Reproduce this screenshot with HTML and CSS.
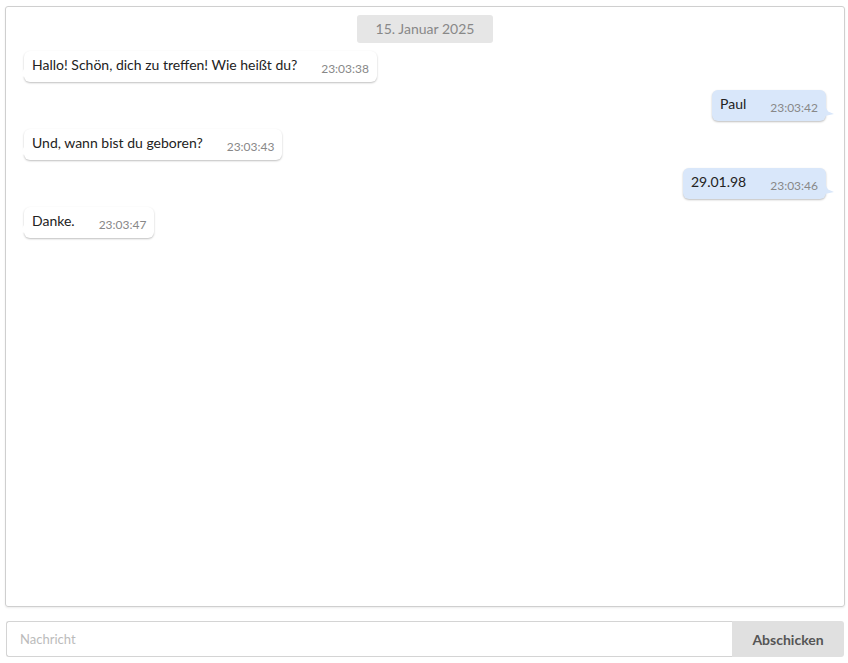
FILE: index.html
```html
<!DOCTYPE html>
<html lang="de">
<head>
<meta charset="utf-8">
<title>Chat</title>
<link rel="stylesheet" href="styles.css">
</head>
<body>
<div class="page">
  <div class="chat">
    <div class="date-row"><span class="date">15. Januar 2025</span></div>
    <div class="msg in"><span class="text">Hallo! Schön, dich zu treffen! Wie heißt du?</span><span class="time">23:03:38</span></div>
    <div class="msg out"><span class="text">Paul</span><span class="time">23:03:42</span></div>
    <div class="msg in"><span class="text">Und, wann bist du geboren?</span><span class="time">23:03:43</span></div>
    <div class="msg out"><span class="text">29.01.98</span><span class="time">23:03:46</span></div>
    <div class="msg in"><span class="text">Danke.</span><span class="time">23:03:47</span></div>
  </div>
  <form class="composer">
    <input class="input" type="text" placeholder="Nachricht">
    <button class="send" type="button">Abschicken</button>
  </form>
</div>
</body>
</html>
```
FILE: styles.css
```css
* { box-sizing: border-box; }
html, body { margin: 0; padding: 0; background: #fff; }
body { font-family: Lato, "Open Sans", sans-serif; color: #222; }
.page { padding: 6px 3px 0 5px; width: 848px; }
.chat {
  width: 840px;
  height: 601px;
  border: 1px solid #cfcfcf;
  border-radius: 3px;
  box-shadow: 0 1px 2px rgba(0,0,0,0.08);
  padding: 8px 18px;
  display: flex;
  flex-direction: column;
  gap: 8px;
}
.date-row { display: flex; justify-content: center; }
.date {
  background: #e6e6e6;
  color: #888;
  font-size: 14px;
  line-height: 28px;
  width: 136px;
  text-align: center;
  border-radius: 3px;
}
.msg {
  position: relative;
  display: flex;
  align-items: flex-start;
  height: 31px;
  padding: 0 8px;
  border-radius: 6px;
  font-size: 14px;
  box-shadow: 0 1px 2px rgba(0,0,0,0.25);
}
.msg.in { align-self: flex-start; background: #fff; }
.msg.out { align-self: flex-end; background: #d9e7fa; }
.text { line-height: 16px; padding-top: 6px; }
.time { color: #888; font-size: 12px; line-height: 14px; padding-top: 11px; margin-left: 24px; }
.msg::before {
  content: "";
  position: absolute;
  bottom: 5px;
  width: 9px;
  height: 14px;
}
.msg.in::before {
  left: -8px;
  background: #fff;
  clip-path: polygon(100% 0, 92% 40%, 65% 68%, 0 85%, 100% 100%);
  filter: drop-shadow(0 1px 1px rgba(0,0,0,0.2));
}
.msg.out::before {
  right: -8px;
  background: #d9e7fa;
  clip-path: polygon(0 0, 8% 40%, 35% 68%, 100% 85%, 0 100%);
}
.composer {
  margin: 14px 0 0 1px;
  width: 838px;
  height: 36px;
  display: flex;
}
.input {
  flex: 1;
  height: 36px;
  border: 1px solid #d4d4d4;
  border-right: none;
  border-radius: 3px 0 0 3px;
  padding: 0 13px;
  font-family: Lato, sans-serif;
  font-size: 13px;
  color: #333;
  outline: none;
}
.input::placeholder { color: #bbb; }
.send {
  width: 112px;
  height: 36px;
  border: none;
  background: #e0e0e0;
  border-radius: 0 3px 3px 0;
  font-family: Lato, sans-serif;
  font-weight: bold;
  font-size: 14px;
  color: #555;
  padding: 0;
}
```
